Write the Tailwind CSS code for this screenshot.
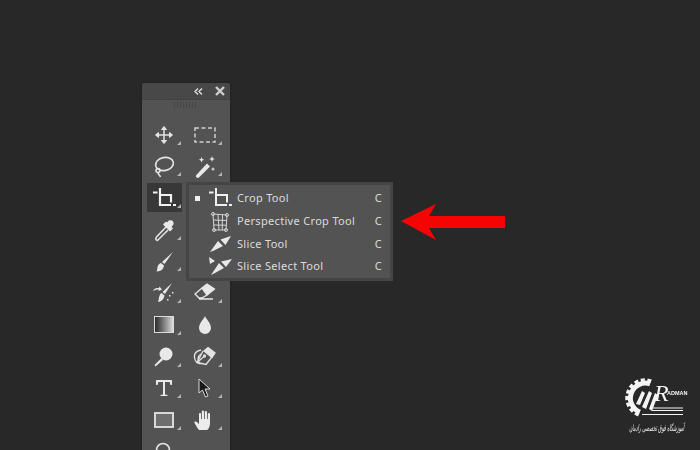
<!DOCTYPE html>
<html lang="en">
<head>
    <meta charset="UTF-8">
    <title>Crop Tool flyout</title>
    <script src="https://cdn.jsdelivr.net/npm/@tailwindcss/browser@4"></script>
</head>
<body class="bg-[#282828]">
<div class="relative w-[700px] h-[450px] overflow-hidden pt-[83px] pl-[142px] blur-[.35px] font-['Noto_Sans',sans-serif]">

    <!-- Toolbar -->
    <div class="w-[88px] h-[400px] bg-[#535353] rounded-t-[3px] shadow-[0_0_2px_#1c1c1c]">
        <div class="h-[17px] bg-[#484848] flex items-center justify-end gap-[12px] pr-[5px] border-b border-[#414141] rounded-t-[3px]">
            <svg width="9" height="7" viewBox="0 0 9 7" fill="none" stroke="#e0e0e0" stroke-width="1.4"><path d="M4 .5 1 3.5 4 6.500M8 .5 5 3.500 8 6.500"/></svg>
            <svg width="10" height="10" viewBox="0 0 10 10" fill="none" stroke="#cfcfcf" stroke-width="2.4"><path d="M1 1 9 9M9 1 1 9"/></svg>
        </div>
        <div class="h-[19px] flex justify-center pt-[2px]">
            <div class="w-[24px] h-[6px] bg-[repeating-linear-gradient(90deg,#464646_0_1px,#535353_1px_3px)]"></div>
        </div>

        <div class="grid grid-cols-[41px_41px] auto-rows-[31.7px] pl-[1.5px]">
            <!-- Move -->
            <div class="relative flex items-center justify-center">
                <svg width="20" height="20" viewBox="0 0 20 20" fill="none" stroke="#e4e4e4" stroke-width="1.5"><path d="M10 2v16M2 10h16"/><path d="M7.500 4.500 10 1.500l2.500 3zM7.500 15.500l2.500 3 2.500-3zM4.500 7.500l-3 2.500 3 2.500zM15.500 7.500l3 2.500-3 2.500z" fill="#e4e4e4" stroke-width="1"/></svg>
                <div class="absolute right-[4px] bottom-[6px] w-0 h-0 border-l-[4px] border-l-transparent border-b-[4px] border-b-[#b4b4b4]"></div>
            </div>
            <!-- Marquee -->
            <div class="relative flex items-center justify-center">
                <svg width="22" height="18" viewBox="0 0 22 18" fill="none" stroke="#d0d0d0" stroke-width="1.500" stroke-dasharray="4 2.500"><rect x="1" y="2" width="20" height="14"/></svg>
                <div class="absolute right-[4px] bottom-[6px] w-0 h-0 border-l-[4px] border-l-transparent border-b-[4px] border-b-[#b4b4b4]"></div>
            </div>
            <!-- Lasso -->
            <div class="relative flex items-center justify-center">
                <svg width="22" height="22" viewBox="0 0 22 22" fill="none" stroke="#e4e4e4" stroke-width="1.600"><ellipse cx="11.500" cy="8" rx="9" ry="6.500" transform="rotate(-12 11.500 8)"/><circle cx="5" cy="14.500" r="2"/><path d="M5 16.500c0 2 1.500 2 2.500 4.500"/></svg>
                <div class="absolute right-[4px] bottom-[6px] w-0 h-0 border-l-[4px] border-l-transparent border-b-[4px] border-b-[#b4b4b4]"></div>
            </div>
            <!-- Magic wand -->
            <div class="relative flex items-center justify-center">
                <svg width="24" height="24" viewBox="0 0 24 24" fill="#e8e8e8"><path d="M14 8.500l3 3L6 22.500c-1 .8-2 .4-2.600-.2s-.8-1.600-.1-2.400z"/><path d="M8.500 2l.8 2 2 .8-2 .8-.8 2-.8-2-2-.8 2-.8zM19 1l.8 2.200 2.200.8-2.200.8-.8 2.200-.8-2.200-2.200-.8 2.200-.8zM20 12l.6 1.500 1.500.6-1.500.6-.6 1.500-.6-1.500-1.500-.6 1.500-.6z"/></svg>
                <div class="absolute right-[4px] bottom-[6px] w-0 h-0 border-l-[4px] border-l-transparent border-b-[4px] border-b-[#b4b4b4]"></div>
            </div>
            <!-- Crop (selected) -->
            <div class="relative flex items-center justify-center">
                <div class="absolute left-[3px] top-[1px] w-[35px] h-[29px] bg-[#383838]"></div>
                <svg class="relative" width="23" height="20" viewBox="0 0 23 20" fill="none" stroke="#f2f2f2" stroke-width="2.200"><path d="M0 4.500h4.500M7 0v17h11M7 7h11v7.500M20 17h3"/></svg>
                <div class="absolute right-[4px] bottom-[6px] w-0 h-0 border-l-[4px] border-l-transparent border-b-[4px] border-b-[#b4b4b4]"></div>
            </div>
            <div></div>
            <!-- Eyedropper -->
            <div class="relative flex items-center justify-center">
                <svg width="22" height="24" viewBox="0 0 22 24" fill="none" stroke="#e8e8e8" stroke-width="1.500"><path d="M13 9 3.500 19c-1.500 2-.5 3 1 3.500L15 12"/><path d="M11 6.500l6 6 2-2-1.500-1.500 2-2.500c1-1.500 0-4-3-3.500l-2.500 2.500-1-1z" fill="#e8e8e8"/></svg>
                <div class="absolute right-[4px] bottom-[6px] w-0 h-0 border-l-[4px] border-l-transparent border-b-[4px] border-b-[#b4b4b4]"></div>
            </div>
            <div></div>
            <!-- Brush -->
            <div class="relative flex items-center justify-center">
                <svg width="22" height="22" viewBox="0 0 22 22" fill="#e8e8e8"><path d="M20 1 11.500 13l-2.500-2zM8 12l3 2.500c-.5 3-2.500 6-7.500 6 1-1.500.5-2.500 1-4.500s1.800-3.500 3.500-4z"/></svg>
                <div class="absolute right-[4px] bottom-[6px] w-0 h-0 border-l-[4px] border-l-transparent border-b-[4px] border-b-[#b4b4b4]"></div>
            </div>
            <div></div>
            <!-- History brush -->
            <div class="relative flex items-center justify-center">
                <svg width="24" height="22" viewBox="0 0 24 22" fill="#e8e8e8"><path d="M20 1 13 12l-2.500-2zM9.500 11l3 2.500c-.5 3-2.500 6-6.500 6.500.8-1.500.5-2.500 1-4.500s1-3.800 2.500-4.500z"/><path d="M1 9c1-2.500 3-3.500 6-3l.5-1.500L10 7.500 6.500 9l.4-1.400c-2 0-3.400.3-5.900 1.400zM17 13h1.500v1.500H17zM20 10h1.500v1.500H20zM15 17h1.500v1.500H15z"/></svg>
                <div class="absolute right-[4px] bottom-[6px] w-0 h-0 border-l-[4px] border-l-transparent border-b-[4px] border-b-[#b4b4b4]"></div>
            </div>
            <!-- Eraser -->
            <div class="relative flex items-center justify-center">
                <svg width="24" height="20" viewBox="0 0 24 20" fill="none" stroke="#e8e8e8" stroke-width="1.300"><path d="M9 5 14 1 21.500 6 14 12z" fill="#e8e8e8"/><path d="M9 5 2 11l4 4h3l5-3M6 16h14"/></svg>
                <div class="absolute right-[4px] bottom-[6px] w-0 h-0 border-l-[4px] border-l-transparent border-b-[4px] border-b-[#b4b4b4]"></div>
            </div>
            <!-- Gradient -->
            <div class="relative flex items-center justify-center">
                <div class="w-[20px] h-[17px] border border-[#dcdcdc] bg-linear-to-r from-[#2c2c2c] to-[#dcdcdc]"></div>
                <div class="absolute right-[4px] bottom-[6px] w-0 h-0 border-l-[4px] border-l-transparent border-b-[4px] border-b-[#b4b4b4]"></div>
            </div>
            <!-- Paint drop -->
            <div class="relative flex items-center justify-center">
                <svg width="16" height="20" viewBox="0 0 16 20" fill="#e8e8e8"><path d="M8 1c1 3 6 7 6 12a6 6 0 0 1-12 0C2 8 7 4 8 1z"/></svg>
            </div>
            <!-- Dodge -->
            <div class="relative flex items-center justify-center">
                <svg width="22" height="22" viewBox="0 0 22 22" fill="#e8e8e8"><circle cx="13" cy="8" r="6.500"/><path d="M8.500 12 1.500 19l1 1.500 7.500-6.500z"/></svg>
                <div class="absolute right-[4px] bottom-[6px] w-0 h-0 border-l-[4px] border-l-transparent border-b-[4px] border-b-[#b4b4b4]"></div>
            </div>
            <!-- Pen -->
            <div class="relative flex items-center justify-center">
                <svg width="24" height="22" viewBox="0 0 24 22" fill="none" stroke="#e4e4e4" stroke-width="1.300"><path d="M10 5 4 16.500l9 2 5.500-7"/><path d="M15 1.500l7 5.500-3 4.500-8-6.500z" fill="#e4e4e4"/><path d="M4 16.500 11 10.500"/><circle cx="11.500" cy="10" r="1"/><path d="M8 4C3 5 1 8 1.500 11.500S4 17 6.500 17.500C4.500 14.500 4.500 10 8 8"/></svg>
                <div class="absolute right-[4px] bottom-[6px] w-0 h-0 border-l-[4px] border-l-transparent border-b-[4px] border-b-[#b4b4b4]"></div>
            </div>
            <!-- Type -->
            <div class="relative flex items-center justify-center">
                <svg width="18" height="18" viewBox="0 0 18 18" fill="#e8e8e8"><path d="M1 1h16v5h-1.600l-.8-3H10v12.500l2.500.6V17h-7v-.9l2.500-.6V3H3.400l-.8 3H1z"/></svg>
                <div class="absolute right-[4px] bottom-[6px] w-0 h-0 border-l-[4px] border-l-transparent border-b-[4px] border-b-[#b4b4b4]"></div>
            </div>
            <!-- Path selection -->
            <div class="relative flex items-center justify-center">
                <svg width="14" height="20" viewBox="0 0 14 20" fill="#181818" stroke="#dcdcdc" stroke-width="1"><path d="M1 1v14l3.500-3 3 7 2.500-1-3-7h5z"/></svg>
                <div class="absolute right-[4px] bottom-[6px] w-0 h-0 border-l-[4px] border-l-transparent border-b-[4px] border-b-[#b4b4b4]"></div>
            </div>
            <!-- Rectangle -->
            <div class="relative flex items-center justify-center">
                <div class="w-[20px] h-[16px] border-2 border-[#d8d8d8] bg-[#6e6e6e]"></div>
                <div class="absolute right-[4px] bottom-[6px] w-0 h-0 border-l-[4px] border-l-transparent border-b-[4px] border-b-[#b4b4b4]"></div>
            </div>
            <!-- Hand -->
            <div class="relative flex items-center justify-center">
                <svg width="22" height="22" viewBox="0 0 22 22" fill="#ececec"><path d="M5 21c-2-2-3-5-4.500-7-.7-1.200.8-2.200 2-1.200L5 15V5c0-1.500 2-1.500 2 0v5h.8V2.500c0-1.500 2.200-1.500 2.200 0V10h.8V3c0-1.500 2.200-1.500 2.200 0v7h.8V5c0-1.500 2.200-1.500 2.200 0v9c0 4-2 7-3 7z"/></svg>
                <div class="absolute right-[4px] bottom-[6px] w-0 h-0 border-l-[4px] border-l-transparent border-b-[4px] border-b-[#b4b4b4]"></div>
            </div>
            <!-- Zoom, cut off by the window -->
            <div class="relative flex items-center justify-center">
                <svg width="20" height="20" viewBox="0 0 20 20" fill="none" stroke="#e4e4e4" stroke-width="1.700"><circle cx="9" cy="8" r="6.500"/></svg>
            </div>
        </div>
    </div>

    <!-- Crop flyout -->
    <div class="absolute left-[186px] top-[182px] w-[207px] h-[99px] bg-[#535353] border-[3px] border-[#454545] pt-[1px] text-[11px] tracking-[.32px] text-[#dcdcdc]">
        <div class="h-[24px] grid grid-cols-[18px_26px_1fr_auto] items-center">
            <div class="w-[5px] h-[5px] bg-[#f0f0f0] ml-[6px]"></div>
            <svg class="justify-self-center" width="23" height="20" viewBox="0 0 23 20" fill="none" stroke="#f0f0f0" stroke-width="2"><path d="M0 4.500h4.500M7 0v17h11M7 7h11v7.500M20 17h3"/></svg>
            <span class="ml-[4px]">Crop Tool</span>
            <span class="mr-[8px]">C</span>
        </div>
        <div class="h-[23px] grid grid-cols-[18px_26px_1fr_auto] items-center">
            <div></div>
            <svg class="justify-self-center" width="18" height="20" viewBox="0 0 18 20" fill="none" stroke="#d4d4d4" stroke-width="1"><path d="M2 2 16 3 15 18H3zM7 2.500 8 18M11.500 2.800 11.200 18M2.500 8 15.600 8.500M2.800 13 15.300 13.200"/><circle cx="2" cy="2" r="1.500"/><circle cx="16" cy="3" r="1.500"/><circle cx="15" cy="18" r="1.500"/><circle cx="3" cy="18" r="1.500"/></svg>
            <span class="ml-[4px]">Perspective Crop Tool</span>
            <span class="mr-[8px]">C</span>
        </div>
        <div class="h-[22px] grid grid-cols-[18px_26px_1fr_auto] items-center">
            <div></div>
            <svg class="justify-self-center" width="21" height="16" viewBox="0 0 21 16" fill="#e8e8e8"><path d="M8 5 13 10 4 14.500 0 16zM10.500 3.500 21 0 15.500 9z"/></svg>
            <span class="ml-[4px]">Slice Tool</span>
            <span class="mr-[8px]">C</span>
        </div>
        <div class="h-[22px] grid grid-cols-[18px_26px_1fr_auto] items-center">
            <div></div>
            <svg class="justify-self-center" width="23" height="18" viewBox="0 0 23 18" fill="#e8e8e8"><path d="M0 0 6 4 1 7zM10 6 15 11 6 16 2 18zM12 4.500 23 2 17 10z"/></svg>
            <span class="ml-[4px]">Slice Select Tool</span>
            <span class="mr-[8px]">C</span>
        </div>
    </div>

    <!-- Red arrow -->
    <svg class="absolute left-[400px] top-[203px]" width="106" height="38" viewBox="0 0 106 38" fill="#f60404"><path d="M1 18 36 1 29 13H105V25H29L36 37z"/></svg>

    <!-- Watermark logo -->
    <div class="absolute left-[622px] top-[378px] w-[66px] h-[56px]">
        <svg class="absolute left-0 top-0" width="66" height="44" viewBox="0 0 66 44" fill="none" stroke="#f4f4f4">
            <path d="M29.200 3.100A18 18 0 0 0 16.800 36.900" stroke-width="3.500" stroke-dasharray="4 2.500"/>
            <path d="M28.100 5.900A15 15 0 0 0 17.900 34.100" stroke-width="5"/>
            <path d="M14 26 20 13l3 2-5 12zM20 29 27 13l3 2-6 16zM27 31 33 15l3 2-6 16z" fill="#f4f4f4" stroke="none"/>
            <path d="M20 36.500H61M30 30H61M30 32.500H61" stroke-width="1"/>
        </svg>
        <span class="absolute left-[32px] top-[3px] font-['Liberation_Serif',serif] italic text-[24px] leading-none text-[#f4f4f4]">R</span>
        <span class="absolute left-[45px] top-[13px] font-['Liberation_Sans',sans-serif] font-bold text-[5.5px] leading-none text-[#f4f4f4]">ADMAN</span>
        <span dir="rtl" class="absolute right-[4px] top-[46px] whitespace-nowrap origin-right scale-x-[.47] font-['DejaVu_Sans',sans-serif] italic text-[9px] leading-none text-[#f0f0f0]">آموزشگاه فوق تخصصی رادمان</span>
    </div>
</div>
</body>
</html>
